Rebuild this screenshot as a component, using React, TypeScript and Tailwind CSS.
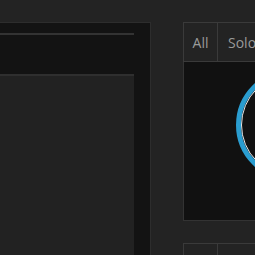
export default function App() {
  return (
    <div className="w-[255px] h-[255px] overflow-hidden bg-[#232323] flex pt-[22px]" style={{ fontFamily: '"Open Sans", sans-serif' }}>
      <div className="w-[151px] shrink-0 bg-[#131313] border-t border-r border-[#2d2d2d] flex flex-col pt-[10px]">
        <div className="w-[134px] h-[2px] shrink-0 bg-[#333333]" />
        <div className="w-[134px] flex-1 mt-[39px] border-t-2 border-[#2f2f2f] bg-[#222222]" />
      </div>
      <div className="ml-[32px] w-[220px] shrink-0 flex flex-col">
        <div className="flex h-[40px] shrink-0 border border-[#3a3a3a] bg-[#232323] text-[14px] text-[#9a9a9a]">
          <div className="w-[34px] flex items-center justify-center border-r border-[#3a3a3a]">All</div>
          <div className="px-[10px] flex items-center border-r border-[#3a3a3a]">Solo</div>
        </div>
        <div className="h-[159px] shrink-0 bg-[#111111] border-l border-b border-[#333333] pl-[52px] pt-[7px]">
          <div className="w-[112px] h-[112px] rounded-full border-[5px] border-[#2a9dd0]">
            <div className="w-full h-full rounded-full border-[1.5px] border-[#e8e8e8] bg-[#111111]" />
          </div>
        </div>
        <div className="mt-[22px] flex h-[40px] shrink-0 border border-[#3a3a3a] bg-[#232323]">
          <div className="w-[34px] border-r border-[#3a3a3a]" />
          <div className="w-[60px] border-r border-[#3a3a3a]" />
        </div>
      </div>
    </div>
  )
}
